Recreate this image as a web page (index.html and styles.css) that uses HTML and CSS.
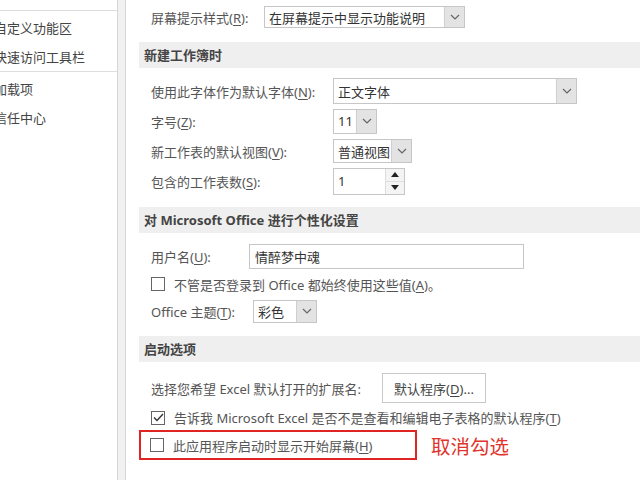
FILE: index.html
```html
<!DOCTYPE html>
<html lang="zh-CN">
<head>
<meta charset="UTF-8">
<meta name="viewport" content="width=device-width, initial-scale=1.0">
<title>Excel 选项</title>
<link rel="stylesheet" href="styles.css">
</head>
<body>
<div class="window">
    <div class="sidebar">
        <div class="sep"></div>
        <div class="nav-item">自定义功能区</div>
        <div class="nav-item">快速访问工具栏</div>
        <div class="sep"></div>
        <div class="nav-item">加载项</div>
        <div class="nav-item">信任中心</div>
    </div>
    <div class="divider"></div>

    <div class="content">
        <div class="row row-top">
            <span class="label">屏幕提示样式(<u>R</u>):</span>
            <div class="select w-tip">
                <span class="value">在屏幕提示中显示功能说明</span>
                <span class="drop"><svg width="10" height="6" viewBox="0 0 10 6"><polyline points="1,1 5,5 9,1" fill="none" stroke="#666" stroke-width="1.2"/></svg></span>
            </div>
        </div>

        <div class="section-title">新建工作簿时</div>
        <div class="group">
            <div class="row">
                <span class="label col">使用此字体作为默认字体(<u>N</u>):</span>
                <div class="select w-font">
                    <span class="value">正文字体</span>
                    <span class="drop"><svg width="10" height="6" viewBox="0 0 10 6"><polyline points="1,1 5,5 9,1" fill="none" stroke="#666" stroke-width="1.2"/></svg></span>
                </div>
            </div>
            <div class="row">
                <span class="label col">字号(<u>Z</u>):</span>
                <div class="select w-size">
                    <span class="value">11</span>
                    <span class="drop"><svg width="10" height="6" viewBox="0 0 10 6"><polyline points="1,1 5,5 9,1" fill="none" stroke="#666" stroke-width="1.2"/></svg></span>
                </div>
            </div>
            <div class="row">
                <span class="label col">新工作表的默认视图(<u>V</u>):</span>
                <div class="select w-view">
                    <span class="value">普通视图</span>
                    <span class="drop"><svg width="10" height="6" viewBox="0 0 10 6"><polyline points="1,1 5,5 9,1" fill="none" stroke="#666" stroke-width="1.2"/></svg></span>
                </div>
            </div>
            <div class="row">
                <span class="label col">包含的工作表数(<u>S</u>):</span>
                <div class="spin">
                    <span class="value">1</span>
                    <span class="spin-btns">
                        <span class="spin-btn"><svg width="8" height="5" viewBox="0 0 8 5"><polygon points="0,5 4,0 8,5" fill="#222"/></svg></span>
                        <span class="spin-btn"><svg width="8" height="5" viewBox="0 0 8 5"><polygon points="0,0 4,5 8,0" fill="#222"/></svg></span>
                    </span>
                </div>
            </div>
        </div>

        <div class="section-title">对 Microsoft Office 进行个性化设置</div>
        <div class="group group-user">
            <div class="row row-user">
                <span class="label col-user">用户名(<u>U</u>):</span>
                <div class="input w-user">情醉梦中魂</div>
            </div>
            <div class="row row-check">
                <span class="checkbox"></span>
                <span class="label">不管是否登录到 Office 都始终使用这些值(<u>A</u>)。</span>
            </div>
            <div class="row row-theme">
                <span class="label col-theme">Office 主题(<u>T</u>):</span>
                <div class="select w-theme">
                    <span class="value">彩色</span>
                    <span class="drop"><svg width="10" height="6" viewBox="0 0 10 6"><polyline points="1,1 5,5 9,1" fill="none" stroke="#666" stroke-width="1.2"/></svg></span>
                </div>
            </div>
        </div>

        <div class="section-title">启动选项</div>
        <div class="group group-start">
            <div class="row row-btn">
                <span class="label col-ext">选择您希望 Excel 默认打开的扩展名:</span>
                <button class="btn">默认程序(<u>D</u>)...</button>
            </div>
            <div class="row row-check2">
                <span class="checkbox checked"><svg width="11" height="9" viewBox="0 0 11 9"><polyline points="1,4.5 4,7.5 10,1" fill="none" stroke="#333" stroke-width="1.4"/></svg></span>
                <span class="label">告诉我 Microsoft Excel 是否不是查看和编辑电子表格的默认程序(<u>T</u>)</span>
            </div>
            <div class="highlight-row">
                <div class="highlight">
                    <span class="checkbox"></span>
                    <span class="label">此应用程序启动时显示开始屏幕(<u>H</u>)</span>
                </div>
                <span class="note">取消勾选</span>
            </div>
        </div>
    </div>
</div>
</body>
</html>
```

FILE: styles.css
```css
body, html {
    margin: 0;
    padding: 0;
    height: 100%;
    overflow: hidden;
    background: #fff;
}

body {
    font-family: "Noto Sans", "Noto Sans CJK SC", sans-serif;
    font-size: 13px;
    color: #555;
}

u {
    text-decoration: underline;
    text-underline-offset: 2px;
}

.window {
    display: flex;
    height: 480px;
}

/* left navigation */
.sidebar {
    width: 117px;
    padding-top: 10px;
    overflow: hidden;
    white-space: nowrap;
}

.sep {
    height: 1px;
    background-color: #dedede;
}

.nav-item {
    height: 29px;
    line-height: 30px;
    margin-left: -6px;
    color: #444;
}

.sep + .nav-item {
    margin-top: 2px;
}

.divider {
    width: 7px;
    background-color: #f1f1f1;
    border-left: 1px solid #d6d6d6;
    border-right: 1px solid #d6d6d6;
}

/* right side */
.content {
    flex: 1;
    padding-left: 13px;
    white-space: nowrap;
}

.row {
    display: flex;
    align-items: center;
    height: 30px;
    padding-left: 12px;
}

.row-top {
    margin-top: 3px;
    height: 28px;
}

.section-title {
    height: 26px;
    line-height: 26px;
    padding-left: 5px;
    background-color: #efefef;
    color: #444;
    font-weight: bold;
    margin-top: 11px;
}

.group {
    padding-top: 8px;
}

.label {
    color: #555;
}

.col {
    width: 182px;
}

.row-top .label {
    width: 113px;
}

.select, .spin, .input {
    display: flex;
    align-items: stretch;
    border: 1px solid #c6c6c6;
    background: #fff;
    box-sizing: border-box;
    color: #333;
}

.select .value, .spin .value {
    flex: 1;
    padding-left: 4px;
    display: flex;
    align-items: center;
    overflow: hidden;
}

.drop {
    width: 19px;
    background-color: #e3e3e3;
    border-left: 1px solid #cfcfcf;
    display: flex;
    align-items: center;
    justify-content: center;
}

.w-tip { width: 201px; height: 22px; }
.w-font { width: 244px; height: 26px; }
.w-size { width: 44px; height: 25px; }
.w-view { width: 79px; height: 24px; }
.w-theme { width: 64px; height: 23px; }

.spin {
    width: 72px;
    height: 27px;
}

.spin-btns {
    width: 18px;
    display: flex;
    flex-direction: column;
    border-left: 1px solid #ddd;
}

.spin-btn {
    flex: 1;
    display: flex;
    align-items: center;
    justify-content: center;
    background: #f4f4f4;
}

.spin-btn + .spin-btn {
    border-top: 1px solid #ddd;
}

.input {
    align-items: center;
    padding-left: 5px;
    height: 25px;
}

.w-user { width: 275px; }

.group-user {
    padding-top: 8px;
}

.col-user { width: 98px; }
.col-theme { width: 102px; }

.row-check {
    height: 26px;
}

.row-theme {
    height: 28px;
}

.checkbox {
    width: 12px;
    height: 12px;
    border: 1px solid #666;
    background: #fff;
    margin-right: 9px;
    display: flex;
    align-items: center;
    justify-content: center;
    flex-shrink: 0;
}

.group-start {
    padding-top: 9px;
}

.row-btn {
    height: 34px;
}

.col-ext { width: 231px; }

.btn {
    width: 104px;
    height: 30px;
    font-family: inherit;
    font-size: 13px;
    color: #444;
    background: #fff;
    border: 1px solid #c8c8c8;
}

.row-check2 {
    height: 25px;
}

.highlight-row {
    display: flex;
    align-items: center;
}

.highlight {
    display: flex;
    align-items: center;
    width: 278px;
    height: 30px;
    box-sizing: border-box;
    border: 2px solid #e02424;
    padding-left: 9px;
}

.note {
    margin-left: 14px;
    font-size: 19.5px;
    color: #e0342c;
}
```
